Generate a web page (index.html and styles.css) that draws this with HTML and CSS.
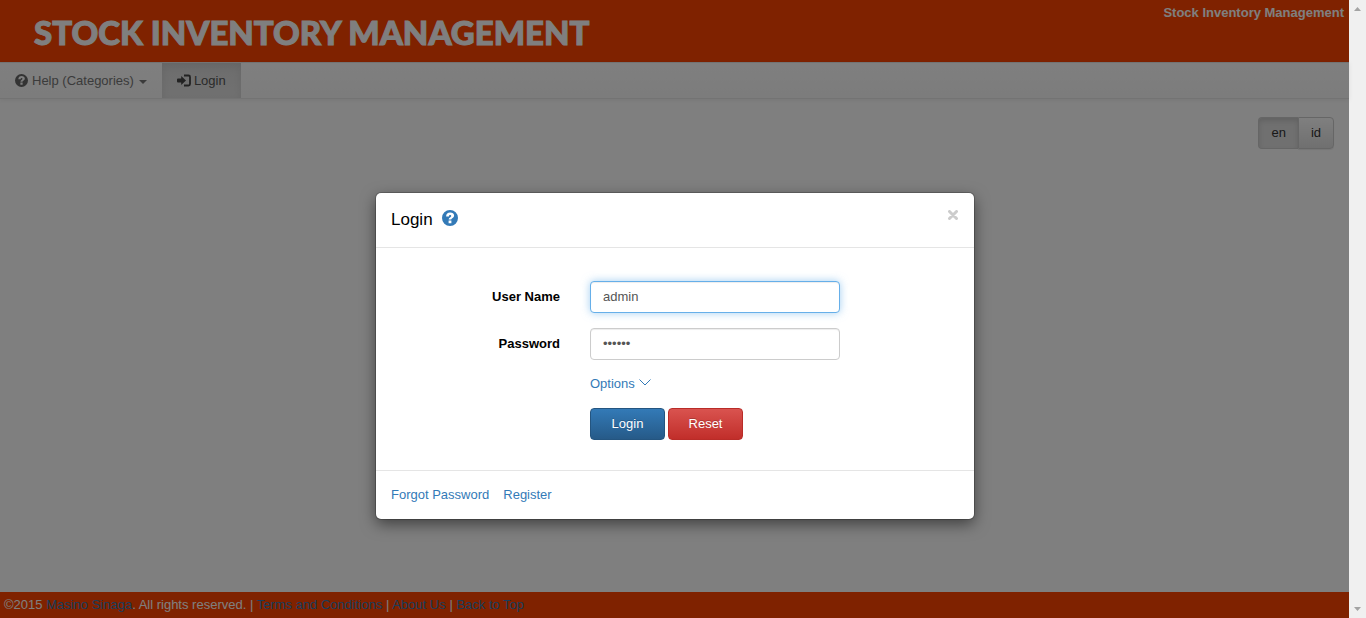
FILE: index.html
```html
<!DOCTYPE html>
<html lang="en">
<head>
<meta charset="utf-8">
<title>Stock Inventory Management</title>
<link rel="stylesheet" href="styles.css">
</head>
<body>
<svg class="sprite" aria-hidden="true">
  <symbol id="help" viewBox="0 0 16 16">
    <path fill="currentColor" fill-rule="evenodd" d="M8 0a8 8 0 1 1 0 16A8 8 0 0 1 8 0zM6.600 10.600v2.600h2.800v-2.600zM4.100 6.400h2.800c0-1 .4-1.500 1.200-1.500.7 0 1.100.4 1.100 1 0 1.400-2.500 1.400-2.500 3.700h2.600c0-1.400 2.800-1.600 2.800-4.100 0-1.900-1.700-3.100-3.900-3.100-2.500 0-4.100 1.500-4.100 4z"/>
  </symbol>
</svg>
<div class="window">
  <div class="page">
    <header class="header">
      <h1 class="brand">STOCK INVENTORY MANAGEMENT</h1>
      <span class="site-name">Stock Inventory Management</span>
    </header>
    <nav class="navbar">
      <a class="nav-link" href="#help-categories"><svg class="icon"><use href="#help"/></svg>Help (Categories)<span class="caret"></span></a>
      <a class="nav-link active" href="#login"><svg class="icon icon-login" viewBox="0 0 14 13"><path fill="currentColor" d="M0 5.500q0-1 1-1h3.200V2L9 6.500 4.200 11V8.500H1q-1 0-1-1z"/><path fill="none" stroke="currentColor" stroke-width="1.800" d="M7 1.500h4.500q1.500 0 1.500 1.500v7q0 1.500-1.500 1.500H7"/></svg>Login</a>
    </nav>
    <main class="content">
      <div class="languages">
        <button class="lang selected" type="button">en</button><button class="lang" type="button">id</button>
      </div>
    </main>
    <footer class="footer">©2015 <a href="#author">Masino Sinaga</a>. All rights reserved. | <a href="#terms">Terms and Conditions</a> | <a href="#about">About Us</a> | <a href="#top">Back to Top</a></footer>
    <div class="backdrop">
      <section class="modal" role="dialog" aria-labelledby="modal-title">
        <div class="modal-header">
          <h2 class="modal-title" id="modal-title">Login</h2>
          <a class="title-help" href="#help" aria-label="Help"><svg class="icon-large"><use href="#help"/></svg></a>
          <button class="close" type="button" aria-label="Close"><svg class="close-icon" viewBox="0 0 10 10"><path d="M1.500 1.500l7 7M8.500 1.500l-7 7"/></svg></button>
        </div>
        <form class="modal-body">
          <label class="label" for="username">User Name</label>
          <input class="field focused" id="username" type="text" value="admin" autofocus>
          <label class="label" for="password">Password</label>
          <input class="field" id="password" type="password" value="secret">
          <a class="options" href="#options">Options <svg class="chevron" viewBox="0 0 12 7"><path d="M.5.500L6 6l5.500-5.500"/></svg></a>
          <div class="actions">
            <button class="btn primary" type="button">Login</button>
            <button class="btn danger" type="reset">Reset</button>
          </div>
        </form>
        <div class="modal-footer">
          <a href="#forgot">Forgot Password</a>
          <a href="#register">Register</a>
        </div>
      </section>
    </div>
  </div>
  <div class="scrollbar" aria-hidden="true">
    <svg class="arrow" viewBox="0 0 7 4"><path d="M0 4L3.500 0 7 4z"/></svg>
    <svg class="arrow" viewBox="0 0 7 4"><path d="M0 0h7L3.500 4z"/></svg>
  </div>
</div>
</body>
</html>
```
FILE: styles.css
```css
* { box-sizing: border-box; }
body {
  margin: 0;
  font: 13px/18px "Liberation Sans", Arial, sans-serif;
  color: #000;
  background: #fff;
}
a { color: #337ab7; text-decoration: none; }
button, input { font: inherit; }
.sprite { display: none; }
.window { display: flex; height: 100vh; }
.page { position: relative; flex: 1; display: flex; flex-direction: column; }
.scrollbar {
  width: 17px;
  display: flex;
  flex-direction: column;
  align-items: center;
  justify-content: space-between;
  padding: 7px 0;
  background: #f0f0f0;
}
.arrow { width: 7px; height: 4px; fill: #a3a3a3; }

.header {
  display: flex;
  justify-content: space-between;
  height: 62px;
  padding: 4px 5px 0 34px;
  background: #ff4500;
  color: #fff;
}
.brand {
  margin: 0;
  font: 900 33px/56px Lato, sans-serif;
  white-space: nowrap;
  -webkit-text-stroke: 1px currentColor;
}
.site-name { font-weight: bold; }

.navbar {
  display: flex;
  height: 37px;
  border: solid #e7e7e7;
  border-width: 1px 0;
  background: linear-gradient(#fff, #f8f8f8);
  box-shadow: 0 1px 5px rgba(0, 0, 0, .08);
}
.nav-link { display: flex; align-items: center; padding: 0 15px; color: #777; }
.nav-link.active {
  color: #555;
  background: linear-gradient(#dbdbdb, #e2e2e2);
  box-shadow: inset 0 3px 9px rgba(0, 0, 0, .08);
}
.icon { width: 13px; height: 13px; margin-right: 4px; color: #666; }
.icon-login { width: 14px; margin-right: 3px; color: #444; }
.caret {
  margin: 3px 0 0 5px;
  border: 4px solid transparent;
  border-top-color: currentColor;
  border-bottom: 0;
}

.content { flex: 1; padding: 18px 15px; }
.languages { display: flex; justify-content: flex-end; }
.lang {
  height: 32px;
  padding: 0 12px;
  border: 1px solid #ccc;
  border-radius: 0 4px 4px 0;
  background: linear-gradient(#fff, #e0e0e0);
  color: #333;
  box-shadow: 0 1px 1px rgba(0, 0, 0, .08);
}
.lang.selected {
  border-right: 0;
  border-radius: 4px 0 0 4px;
  background: #e0e0e0;
  box-shadow: inset 0 3px 5px rgba(0, 0, 0, .125);
}
.footer { padding: 4px; background: #ff4500; color: #fff; }

.backdrop {
  position: absolute;
  inset: 0;
  display: flex;
  align-items: center;
  justify-content: center;
  padding: 94px 16px 0 17px;
  background: rgba(0, 0, 0, .5);
}
.modal {
  width: 100%;
  max-width: 598px;
  border-radius: 5px;
  background: #fff;
  box-shadow: 0 0 0 1px rgba(0, 0, 0, .2), 0 5px 15px rgba(0, 0, 0, .5);
}
.modal-header {
  display: flex;
  align-items: flex-start;
  height: 55px;
  padding: 15px;
  border-bottom: 1px solid #e5e5e5;
}
.modal-title { margin: 0; font-size: 17px; font-weight: normal; line-height: 24px; }
.title-help { margin-left: 9px; padding-top: 2px; }
.icon-large { display: block; width: 16px; height: 16px; }
.close { display: flex; margin-left: auto; padding: 2px 1px; border: 0; background: none; }
.close-icon {
  width: 10px;
  height: 10px;
  fill: none;
  stroke: #ccc;
  stroke-width: 3;
  stroke-linecap: round;
}
.modal-body {
  display: grid;
  grid-template-columns: 184px 250px;
  column-gap: 30px;
  align-items: center;
  padding: 33px 0 30px;
}
.label { margin-bottom: 15px; text-align: right; font-weight: bold; }
.field {
  width: 100%;
  height: 32px;
  margin-bottom: 15px;
  padding: 5px 12px 7px;
  border: 1px solid #ccc;
  border-radius: 4px;
  outline: 0;
  color: #555;
  box-shadow: inset 0 1px 1px rgba(0, 0, 0, .075);
}
.field.focused {
  border-color: #66afe9;
  box-shadow: inset 0 1px 1px rgba(0, 0, 0, .075), 0 0 8px rgba(102, 175, 233, .6);
}
.options, .actions { grid-column: 2; }
.chevron { width: 12px; height: 7px; margin-left: 1px; vertical-align: 2px; fill: none; stroke: currentColor; }
.actions { display: flex; gap: 3px; margin-top: 15px; }
.btn {
  width: 75px;
  height: 32px;
  border: 1px solid #245580;
  border-radius: 4px;
  background: linear-gradient(#337ab7, #265a88);
  color: #fff;
  text-shadow: 0 -1px 0 rgba(0, 0, 0, .2);
}
.btn.danger { border-color: #b92c28; background: linear-gradient(#d9534f, #c12e2a); }
.modal-footer { display: flex; gap: 14px; padding: 15px; border-top: 1px solid #e5e5e5; }
```
